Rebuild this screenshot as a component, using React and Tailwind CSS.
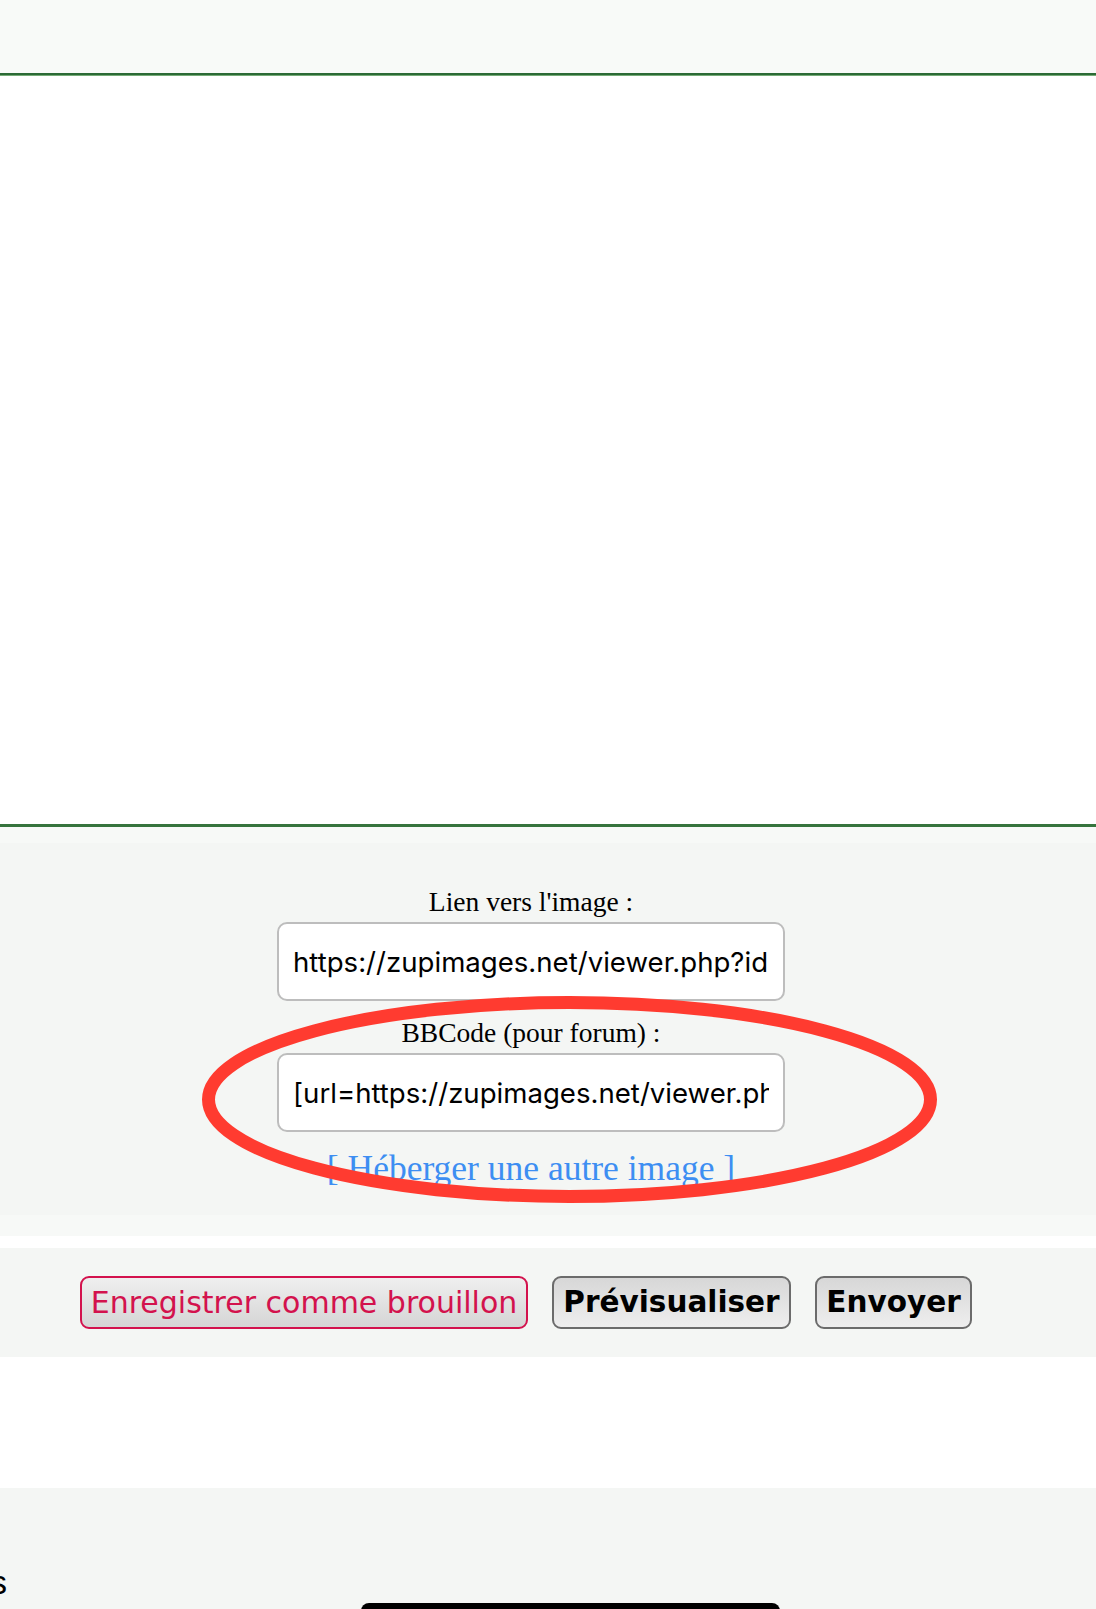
import React from "react";

const serif = { fontFamily: '"Liberation Serif", "Times New Roman", serif' };
const sans = { fontFamily: 'Inter, "Liberation Sans", Arial, sans-serif' };
const btnFont = { fontFamily: '"DejaVu Sans", Verdana, sans-serif' };

const ImageUrlField = ({ label, value }) => (
  <>
    <div className="text-[27.5px] leading-[30px] text-black" style={serif}>
      {label}
    </div>
    <input
      type="text"
      readOnly
      value={value}
      className="mt-[5px] h-[79px] w-[508px] rounded-[10px] border-2 border-[#bdbdbd] bg-white px-[14px] text-[27.6px] text-black outline-none"
      style={sans}
    />
  </>
);

export default function App() {
  return (
    <div className="relative w-[1096px] overflow-hidden bg-white">
      {/* bandeau du haut */}
      <div className="h-[73px] bg-[#f8faf8]" />
      <div className="h-[2px] bg-[#2b6a35]" />
      <div className="h-[1px] bg-[#74ab76]" />

      {/* zone image (vide) */}
      <div className="h-[748px] bg-white" />
      <div className="h-[3px] bg-[#36743d]" />

      {/* liens de l'image */}
      <div className="h-[16px] bg-[#f7f9f7]" />
      <div className="w-full bg-[#f4f6f4] pt-[44px] pb-[27px]">
        <div className="flex w-[1062px] flex-col items-center">
          <ImageUrlField
            label="Lien vers l'image :"
            value="https://zupimages.net/viewer.php?id=24/12/abcd.png"
          />
          <div className="mt-[17px]" />
          <ImageUrlField
            label="BBCode (pour forum) :"
            value="[url=https://zupimages.net/viewer.php?id=24/12/abcd.png][img]https://zupimages.net/up/24/12/abcd.png[/img][/url]"
          />
          <a
            href="#"
            className="mt-[16px] text-[35.5px] leading-[40px] text-[#3d8ef2]"
            style={serif}
          >
            [ Héberger une autre image ]
          </a>
        </div>
      </div>
      <div className="h-[21px] bg-[#f7f9f7]" />
      <div className="h-[12px] bg-white" />

      {/* boutons */}
      <div className="flex gap-[24px] bg-[#f4f6f4] pt-[28px] pb-[28px] pl-[80px]">
        <button
          className="h-[53px] w-[448px] rounded-[9px] border-2 border-[#d3124d] bg-gradient-to-b from-[#efefef] to-[#d5d5d5] text-[30px] text-[#d3124d]"
          style={btnFont}
        >
          Enregistrer comme brouillon
        </button>
        <button
          className="h-[53px] w-[239px] rounded-[9px] border-2 border-[#6b6b6b] bg-gradient-to-b from-[#d7d7d7] to-[#eeeeee] text-[29.5px] font-bold text-black"
          style={btnFont}
        >
          Prévisualiser
        </button>
        <button
          className="h-[53px] w-[157px] rounded-[9px] border-2 border-[#6b6b6b] bg-gradient-to-b from-[#d7d7d7] to-[#eeeeee] text-[29.5px] font-bold text-black"
          style={btnFont}
        >
          Envoyer
        </button>
      </div>

      <div className="h-[131px] bg-white" />

      {/* bas de page */}
      <div className="bg-[#f4f6f4] pt-[74px]">
        <div
          className="-ml-[10px] text-[34px] leading-[40px] text-black"
          style={{ fontFamily: '"Liberation Sans", Arial, sans-serif' }}
        >
          s
        </div>
        <div className="mt-[1px] ml-[361px] h-[40px] w-[419px] rounded-t-[8px] bg-black" />
      </div>

      {/* annotation rouge */}
      <svg
        className="pointer-events-none absolute left-0 top-0"
        width="1096"
        height="1609"
        viewBox="0 0 1096 1609"
      >
        <ellipse
          cx="569.5"
          cy="1099.5"
          rx="361"
          ry="97"
          fill="none"
          stroke="#ff3b30"
          strokeWidth="13"
        />
      </svg>
    </div>
  );
}
